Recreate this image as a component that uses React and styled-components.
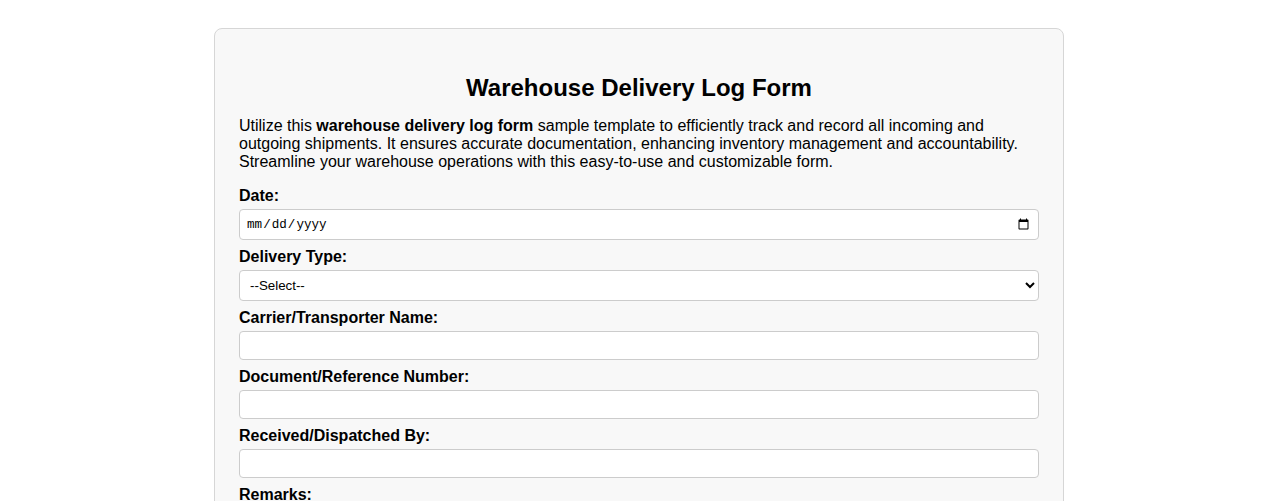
import styled, { createGlobalStyle } from "styled-components"

const GlobalStyle = createGlobalStyle`
  body {
    margin: 8px;
    background: #ffffff;
    font-family: "Liberation Sans", Arial, sans-serif;
    color: #000;
  }
`

const Container = styled.div`
  max-width: 800px;
  margin: 20px auto;
  padding: 24px;
  background-color: #f8f8f8;
  border: 1px solid #d6d6d6;
  border-radius: 8px;
`

const Title = styled.h2`
  text-align: center;
  font-size: 24px;
  margin: 21px 0 15px;
`

const Intro = styled.p`
  font-size: 16px;
  margin: 15px 0 16px;
`

const Field = styled.div`
  margin-bottom: 8px;
`

const Label = styled.label`
  display: block;
  font-weight: bold;
  font-size: 16px;
  margin-bottom: 4px;
`

const inputBase = `
  display: block;
  width: 100%;
  box-sizing: border-box;
  padding: 6px;
  border: 1px solid #cccccc;
  border-radius: 4px;
  background: #ffffff;
  font-family: "Liberation Sans", Arial, sans-serif;
  font-size: 13.333px;
  color: #000;
`

const Input = styled.input`
  ${inputBase}
  height: ${props => (props.type === "date" ? "31px" : "29px")};
  font-family: ${props => (props.type === "date" ? '"Liberation Mono", monospace' : '"Liberation Sans", Arial, sans-serif')};
  font-size: ${props => (props.type === "date" ? "12.6px" : "13.333px")};
`

const Select = styled.select`
  ${inputBase}
  height: 31px;
  padding: 5px 6px;
`

const TextArea = styled.textarea`
  ${inputBase}
  height: 80px;
  resize: vertical;
`

const Submit = styled.button`
  margin-top: 10px;
  padding: 10px 20px;
  border: none;
  border-radius: 4px;
  background: #4caf50;
  color: #fff;
  font-size: 16px;
`

const fields = [
  { id: "carrier", label: "Carrier/Transporter Name:" },
  { id: "docnum", label: "Document/Reference Number:" },
  { id: "handler", label: "Received/Dispatched By:" },
]

const App = () => {
  return (
    <>
      <GlobalStyle />
      <Container>
        <Title>Warehouse Delivery Log Form</Title>
        <Intro>
          Utilize this <strong>warehouse delivery log form</strong> sample template to efficiently track and record all incoming and outgoing shipments. It ensures accurate documentation, enhancing inventory management and accountability. Streamline your warehouse operations with this easy-to-use and customizable form.
        </Intro>
        <form>
          <Field>
            <Label htmlFor="date">Date:</Label>
            <Input type="date" id="date" />
          </Field>
          <Field>
            <Label htmlFor="type">Delivery Type:</Label>
            <Select id="type" defaultValue="">
              <option value="">--Select--</option>
              <option value="incoming">Incoming</option>
              <option value="outgoing">Outgoing</option>
            </Select>
          </Field>
          {fields.map(f => (
            <Field key={f.id}>
              <Label htmlFor={f.id}>{f.label}</Label>
              <Input type="text" id={f.id} />
            </Field>
          ))}
          <Field>
            <Label htmlFor="remarks">Remarks:</Label>
            <TextArea id="remarks" />
          </Field>
          <Submit type="submit">Submit</Submit>
        </form>
      </Container>
    </>
  )
}

export default App
